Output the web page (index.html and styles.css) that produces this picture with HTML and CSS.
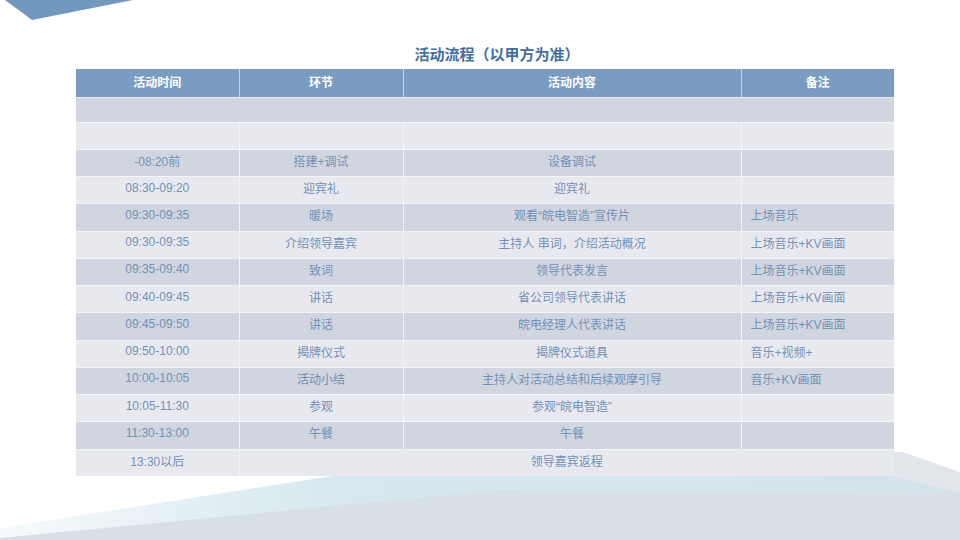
FILE: index.html
```html
<!DOCTYPE html>
<html lang="zh">
<head>
<meta charset="utf-8">
<title>活动流程</title>
<link rel="stylesheet" href="styles.css">
</head>
<body>
<div class="slide">
  <svg class="deco" width="960" height="540" viewBox="0 0 960 540" aria-hidden="true">
    <defs>
      <linearGradient id="cy" x1="0" y1="0" x2="1" y2="0">
        <stop offset="0" stop-color="#f6fafc"/>
        <stop offset="0.35" stop-color="#d6e8ee"/>
        <stop offset="1" stop-color="#d3e3ea"/>
      </linearGradient>
    </defs>
    <polygon points="5,0 133,0 32,20" fill="#7398c0"/>
    <polygon points="0,528 333,476 894,476 960,490 960,540 0,540" fill="url(#cy)"/>
    <polygon points="0,538 500,490 960,493 960,540 0,540" fill="#d7e0e6"/>
    <polygon points="894,452 903,452 960,472 960,493 894,477" fill="#e2e6eb"/>
  </svg>
  <div class="content">
    <h1 class="title">活动流程（以甲方为准）</h1>
    <table class="flow">
      <colgroup>
        <col class="c1"><col class="c2"><col class="c3"><col class="c4">
      </colgroup>
      <thead>
        <tr><th>活动时间</th><th>环节</th><th>活动内容</th><th>备注</th></tr>
      </thead>
      <tbody>
        <tr class="dark first"><td colspan="4"></td></tr>
        <tr class="light"><td></td><td></td><td></td><td class="note"></td></tr>
        <tr class="dark"><td>-08:20前</td><td>搭建+调试</td><td>设备调试</td><td class="note"></td></tr>
        <tr class="light"><td>08:30-09:20</td><td>迎宾礼</td><td>迎宾礼</td><td class="note"></td></tr>
        <tr class="dark"><td>09:30-09:35</td><td>暖场</td><td>观看“皖电智造”宣传片</td><td class="note">上场音乐</td></tr>
        <tr class="light"><td>09:30-09:35</td><td>介绍领导嘉宾</td><td>主持人 串词，介绍活动概况</td><td class="note">上场音乐+KV画面</td></tr>
        <tr class="dark"><td>09:35-09:40</td><td>致词</td><td>领导代表发言</td><td class="note">上场音乐+KV画面</td></tr>
        <tr class="light"><td>09:40-09:45</td><td>讲话</td><td>省公司领导代表讲话</td><td class="note">上场音乐+KV画面</td></tr>
        <tr class="dark"><td>09:45-09:50</td><td>讲话</td><td>皖电经理人代表讲话</td><td class="note">上场音乐+KV画面</td></tr>
        <tr class="light"><td>09:50-10:00</td><td>揭牌仪式</td><td>揭牌仪式道具</td><td class="note">音乐+视频+</td></tr>
        <tr class="dark"><td>10:00-10:05</td><td>活动小结</td><td>主持人对活动总结和后续观摩引导</td><td class="note">音乐+KV画面</td></tr>
        <tr class="light"><td>10:05-11:30</td><td>参观</td><td>参观“皖电智造”</td><td class="note"></td></tr>
        <tr class="dark"><td>11:30-13:00</td><td>午餐</td><td>午餐</td><td class="note"></td></tr>
        <tr class="light"><td>13:30以后</td><td colspan="3">领导嘉宾返程</td></tr>
      </tbody>
    </table>
  </div>
</div>
</body>
</html>
```

FILE: styles.css
```css
html, body {
  margin: 0;
  padding: 0;
  background: #ffffff;
}

.slide {
  position: relative;
  width: 960px;
  height: 540px;
  overflow: hidden;
  font-family: "Liberation Sans", "Noto Sans CJK SC", sans-serif;
}

.deco {
  position: absolute;
  left: 0;
  top: 0;
  z-index: 0;
}

.content {
  position: relative;
  z-index: 1;
  padding-top: 44px;
  padding-left: 76px;
}

.title {
  margin: 0 0 5px 0;
  width: 818px;
  padding-left: 24px;
  box-sizing: border-box;
  text-align: center;
  font-size: 15px;
  line-height: 20px;
  font-weight: bold;
  color: #436e9f;
  font-family: "Noto Sans CJK SC", sans-serif;
}

.flow {
  width: 818px;
  table-layout: fixed;
  border-collapse: collapse;
  font-size: 12px;
  color: #7291b9;
}

.c1 { width: 163px; }
.c2 { width: 164px; }
.c3 { width: 338px; }
.c4 { width: 153px; }

.flow th {
  height: 28px;
  padding: 0 0 2px 0;
  background: #7a9cc1;
  color: #ffffff;
  font-weight: bold;
  font-size: 12px;
  text-align: center;
  border-left: 1px solid #c3d3e4;
  border-bottom: 1px solid #e4e9f0;
  box-sizing: border-box;
}

.flow th:first-child { border-left: none; }

.flow td {
  height: 27.25px;
  padding: 0 0 5px 0;
  text-align: center;
  border-left: 1px solid #f2f4f7;
  border-top: 1px solid #f2f4f7;
  box-sizing: border-box;
  white-space: nowrap;
}

.flow td:first-child { border-left: none; }

.flow td.note {
  text-align: left;
  padding-left: 9px;
}

.flow tr.first td {
  height: 25px;
  border-top: none;
}

.flow tr.dark td { background: #d0d5df; }
.flow tr.light td { background: #e8e9ee; }
```
